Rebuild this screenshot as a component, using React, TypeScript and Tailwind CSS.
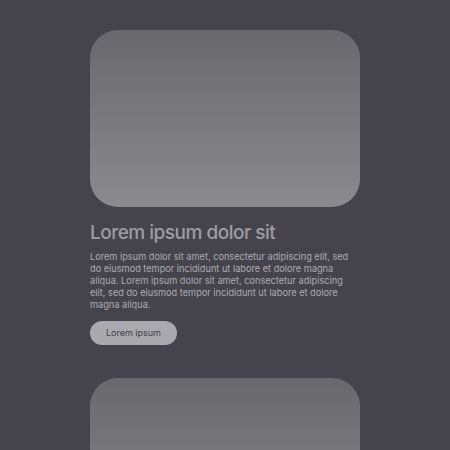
import React from 'react';

const cards = [1, 2];

export default function App() {
  return (
    <div className="h-[450px] bg-[#45444c] flex flex-col items-center pt-[30px] gap-[33px] font-['Inter',sans-serif] overflow-hidden">
      {cards.map((c) => (
        <div key={c} className="w-[270px] flex flex-col">
          <div className="h-[177px] rounded-[28px] bg-gradient-to-b from-[#68686d] to-[#8a8a8f]" />
          <h2 className="mt-[14px] text-[19px] leading-[24px] font-medium tracking-[-0.5px] text-[#9d9ca2]">
            Lorem ipsum dolor sit
          </h2>
          <p className="mt-[6px] text-[9.2px] leading-[12px] text-[#acabb1]">
            Lorem ipsum dolor sit amet, consectetur adipiscing elit, sed do eiusmod tempor incididunt ut labore et dolore magna aliqua. Lorem ipsum dolor sit amet, consectetur adipiscing elit, sed do eiusmod tempor incididunt ut labore et dolore magna aliqua.
          </p>
          <button className="mt-[10px] self-start h-[24px] w-[87px] rounded-full bg-[#aaa9ae] text-[9px] text-[#3f3e45]">
            Lorem ipsum
          </button>
        </div>
      ))}
    </div>
  );
}
